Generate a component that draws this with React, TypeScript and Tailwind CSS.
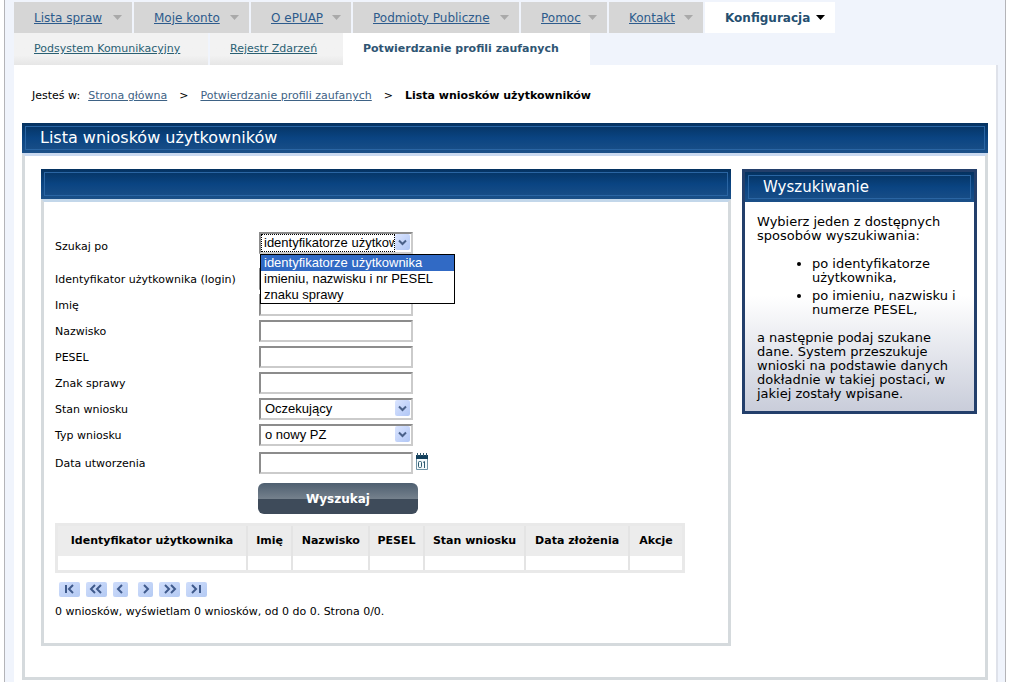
import { useState, type ReactNode } from "react";

const verdana = "font-['DejaVu_Sans','Liberation_Sans',sans-serif]";
const arial = "font-['Liberation_Sans',sans-serif]";

const TABS = [
  { label: "Lista spraw", width: "w-[118px]" },
  { label: "Moje konto", width: "w-[115px]" },
  { label: "O ePUAP", width: "w-[100px]" },
  { label: "Podmioty Publiczne", width: "w-[166px]" },
  { label: "Pomoc", width: "w-[86px]" },
  { label: "Kontakt", width: "w-[94px]" },
];
const SEARCH_MODES = ["identyfikatorze użytkownika", "imieniu, nazwisku i nr PESEL", "znaku sprawy"];
const TEXT_FIELDS = [
  { id: "login", label: "Identyfikator użytkownika (login)" },
  { id: "imie", label: "Imię" },
  { id: "nazwisko", label: "Nazwisko" },
  { id: "pesel", label: "PESEL" },
  { id: "znak", label: "Znak sprawy" },
];
const COLUMNS = [
  { label: "Identyfikator użytkownika", width: "w-[191px]" },
  { label: "Imię", width: "w-[46px]" },
  { label: "Nazwisko", width: "w-[77px]" },
  { label: "PESEL", width: "w-[55px]" },
  { label: "Stan wniosku", width: "w-[102px]" },
  { label: "Data złożenia", width: "w-[104px]" },
  { label: "Akcje", width: "w-[55px]" },
];
const PAGER = [
  { label: "Pierwsza strona", width: 21, d: "M7 3v8M14 3l-4 4 4 4" },
  { label: "Skocz wstecz", width: 21, d: "M9 3L5 7l4 4M15 3l-4 4 4 4" },
  { label: "Poprzednia strona", width: 15, d: "M9 3L5 7l4 4" },
  { label: "Następna strona", width: 15, d: "M6 3l4 4-4 4" },
  { label: "Skocz dalej", width: 21, d: "M6 3l4 4-4 4M12 3l4 4-4 4" },
  { label: "Ostatnia strona", width: 21, d: "M6 3l4 4-4 4M14 3v8" },
];

const fieldBorder = "border-2 border-t-[#8c8c8c] border-l-[#8c8c8c] border-r-[#cbcbcb] border-b-[#cbcbcb] bg-white";

function Caret({ dark = false }: { dark?: boolean }) {
  return (
    <svg width="9" height="5" viewBox="0 0 9 5" className={dark ? "text-black" : "text-[#a9a9a9]"} aria-hidden="true">
      <path d="M0 0h9L4.5 5z" fill="currentColor" />
    </svg>
  );
}

function BlueBar({ children }: { children?: ReactNode }) {
  return (
    <div className="h-[30px] bg-linear-to-b from-[#053260] via-[#0a4482] to-[#1b5088] p-[3px]">
      <div className="flex h-full items-center border border-[#2a65a3] px-[14px] text-white">{children}</div>
    </div>
  );
}

function Field({ id, label, low = false, children }: { id: string; label: string; low?: boolean; children: ReactNode }) {
  return (
    <div className={low ? "flex items-end" : "flex items-center"}>
      <label htmlFor={id} className="w-[204px] shrink-0 pt-[2px]">{label}</label>
      {children}
    </div>
  );
}

function Dropdown({ id, options, focused = false }: { id: string; options: string[]; focused?: boolean }) {
  const [value, setValue] = useState(options[0]);
  return (
    <div className={`flex h-[22px] w-[154px] ${fieldBorder}`}>
      <div className="relative flex w-full">
        <select
          id={id}
          value={value}
          onChange={e => setValue(e.target.value)}
          className={`${arial} h-full w-[134px] appearance-none overflow-hidden bg-white text-[13px] leading-4 outline-none ${focused ? "border border-dotted border-black pl-[2px]" : "pl-1"}`}
        >
          {options.map(o => <option key={o}>{o}</option>)}
        </select>
        <span className="pointer-events-none mb-[2px] flex w-[15px] items-center justify-center rounded-[2px] bg-linear-to-br from-[#dbe5ff] to-[#b0c6f5]">
          <svg width="9" height="7" viewBox="0 0 9 7" fill="none" stroke="#4a6189" strokeWidth="2" aria-hidden="true">
            <path d="M1 1.5L4.5 5 8 1.5" />
          </svg>
        </span>
      </div>
    </div>
  );
}

function SearchForm() {
  return (
    <form onSubmit={e => e.preventDefault()} className="text-[11px]">
      <div className="relative mb-[14px]">
        <Field id="tryb" label="Szukaj po" low>
          <Dropdown id="tryb" options={SEARCH_MODES} focused />
        </Field>
        <ul role="listbox" aria-label="Szukaj po" className={`${arial} absolute top-[22px] left-[205px] z-10 w-[195px] border border-black bg-white text-[13px] leading-4`}>
          {SEARCH_MODES.map((mode, i) => (
            <li key={mode} role="option" aria-selected={i === 0} className={i === 0 ? "bg-[#316ac5] px-[3px] text-white" : "px-[3px]"}>{mode}</li>
          ))}
        </ul>
      </div>
      <div className="space-y-1">
        {TEXT_FIELDS.map(f => (
          <Field key={f.id} id={f.id} label={f.label}>
            <input id={f.id} type="text" className={`h-[22px] w-[154px] px-1 outline-none ${fieldBorder}`} />
          </Field>
        ))}
        <Field id="stan" label="Stan wniosku">
          <Dropdown id="stan" options={["Oczekujący"]} />
        </Field>
        <Field id="typ" label="Typ wniosku">
          <Dropdown id="typ" options={["o nowy PZ"]} />
        </Field>
      </div>
      <div className="mt-[6px]">
        <Field id="data" label="Data utworzenia">
          <input id="data" type="text" className={`h-[22px] w-[154px] px-1 outline-none ${fieldBorder}`} />
          <button type="button" aria-label="Wybierz datę" className="mb-1 ml-[3px]">
            <svg width="12" height="17" viewBox="0 0 12 17" aria-hidden="true">
              <path d="M.5 4.500h11v12H.5z" fill="#f4fafc" stroke="#6f93a5" />
              <path d="M0 2h12v4H0z" fill="#123f5c" />
              <path d="M1.500 0v3M4.500 0v3M7.500 0v3M10.500 0v3" stroke="#345a70" />
              <rect x="2.500" y="8.500" width="3" height="6" rx="1" fill="none" stroke="#2d5a70" />
              <path d="M7 9.500l1.500-1V15" fill="none" stroke="#2d5a70" />
            </svg>
          </button>
        </Field>
      </div>
      <button type="submit" className="mt-[9px] ml-[203px] block h-[31px] w-40 rounded-[6px] bg-linear-to-b from-[#4e5f70] from-0% via-[#74808c] via-50% to-[#3e4b5a] to-52% text-xs font-bold text-white">
        Wyszukaj
      </button>
    </form>
  );
}

export default function App() {
  return (
    <div className={`${verdana} bg-white px-1 text-[11px] leading-[14px] text-black`}>
      <div className="border-x border-[#b4b4b8] bg-[#f0f4fc] px-[9px] pt-[2px]">
        <nav aria-label="Menu główne" className="flex h-[31px] gap-[2px] text-xs">
          {TABS.map(tab => (
            <a key={tab.label} href="#" className={`${tab.width} flex shrink-0 items-center justify-between bg-[#d6d6d6] pr-[10px] pl-5 whitespace-nowrap text-[#2d5b8c]`}>
              <span className="underline">{tab.label}</span>
              <Caret />
            </a>
          ))}
          <a href="#" aria-current="page" className="flex items-center gap-[6px] bg-white pr-[10px] pl-5 font-bold whitespace-nowrap text-[#254f70]">
            Konfiguracja
            <Caret dark />
          </a>
        </nav>
        <nav aria-label="Podmenu" className="flex h-8 text-[11px] text-[#2a6073]">
          <a href="#" className="flex w-[194px] items-center bg-linear-to-b from-[#f2f2f2] from-70% to-[#e6e6e6] pl-5 whitespace-nowrap underline">Podsystem Komunikacyjny</a>
          <a href="#" className="ml-[2px] flex w-[133px] items-center bg-linear-to-b from-[#f2f2f2] from-70% to-[#e6e6e6] pl-5 whitespace-nowrap underline">Rejestr Zdarzeń</a>
          <a href="#" aria-current="page" className="flex w-[247px] items-center bg-white pl-5 font-bold whitespace-nowrap text-[#2f5573]">Potwierdzanie profili zaufanych</a>
        </nav>

        <div className="-mr-[2px] border-r-2 border-[#dfe2ea] bg-white px-2 pt-6 pb-[2px]">
          <nav aria-label="Ścieżka" className="flex h-[14px] items-center pl-[10px] whitespace-nowrap">
            <span>Jesteś w:</span>
            <a href="#" className="ml-2 text-[#3e6285] underline">Strona główna</a>
            <span className="mx-3">&gt;</span>
            <a href="#" className="text-[#3e6285] underline">Potwierdzanie profili zaufanych</a>
            <span className="mx-3">&gt;</span>
            <strong>Lista wniosków użytkowników</strong>
          </nav>

          <main className="mt-5">
            <BlueBar>
              <h1 className="text-base font-normal">Lista wniosków użytkowników</h1>
            </BlueBar>
            <div className="flex items-start gap-[11px] border-[3px] border-[#d5dadd] border-t-[#c9d9f0] px-4 pt-[13px] pr-2 pb-[31px]">
              <section className="min-w-0 flex-1">
                <BlueBar />
                <div className="border-[3px] border-[#d5dadd] border-t-[#c3d7ea] px-[11px] pt-[30px] pb-6">
                  <SearchForm />
                  <table className="mt-[9px] w-full max-w-[630px] border-collapse border-[3px] border-[#e9e9e9] text-[11px]">
                    <thead>
                      <tr className="h-[31px] bg-[#ececec]">
                        {COLUMNS.map(c => <th key={c.label} scope="col" className={`${c.width} border-x-2 border-[#e4e4e4] p-0 font-bold whitespace-nowrap`}>{c.label}</th>)}
                      </tr>
                    </thead>
                    <tbody>
                      <tr className="h-4">
                        {COLUMNS.map(c => <td key={c.label} className="border-x-2 border-[#e4e4e4]" />)}
                      </tr>
                    </tbody>
                  </table>
                  <div className="mt-[9px] flex gap-[6px] pl-1">
                    {PAGER.map((p, i) => (
                      <button key={p.label} type="button" aria-label={p.label} className={i === 3 ? "ml-1 rounded-[2px] bg-linear-to-br from-[#cfddfb] to-[#b4caf3]" : "rounded-[2px] bg-linear-to-br from-[#cfddfb] to-[#b4caf3]"}>
                        <svg width={p.width} height="15" viewBox={`0 0 ${p.width} 15`} fill="none" stroke="#3f5a8c" strokeWidth="2" aria-hidden="true"><path d={p.d} /></svg>
                      </button>
                    ))}
                  </div>
                  <p className="mt-2">0 wniosków, wyświetlam 0 wniosków, od 0 do 0. Strona 0/0.</p>
                </div>
              </section>

              <aside className="w-[235px] shrink-0 border-[3px] border-[#233f6b]">
                <BlueBar>
                  <h2 className="text-[15px] font-normal">Wyszukiwanie</h2>
                </BlueBar>
                <div className="bg-linear-to-b from-white from-45% to-[#c9cdda] px-3 pt-[13px] pb-[10px] text-[13px] leading-[14px]">
                  <p>Wybierz jeden z dostępnych sposobów wyszukiwania:</p>
                  <ul className="my-[14px] list-disc space-y-1 pl-[55px]">
                    <li>po identyfikatorze użytkownika,</li>
                    <li>po imieniu, nazwisku i numerze PESEL,</li>
                  </ul>
                  <p>a następnie podaj szukane dane. System przeszukuje wnioski na podstawie danych dokładnie w takiej postaci, w jakiej zostały wpisane.</p>
                </div>
              </aside>
            </div>
          </main>
        </div>
      </div>
    </div>
  );
}
